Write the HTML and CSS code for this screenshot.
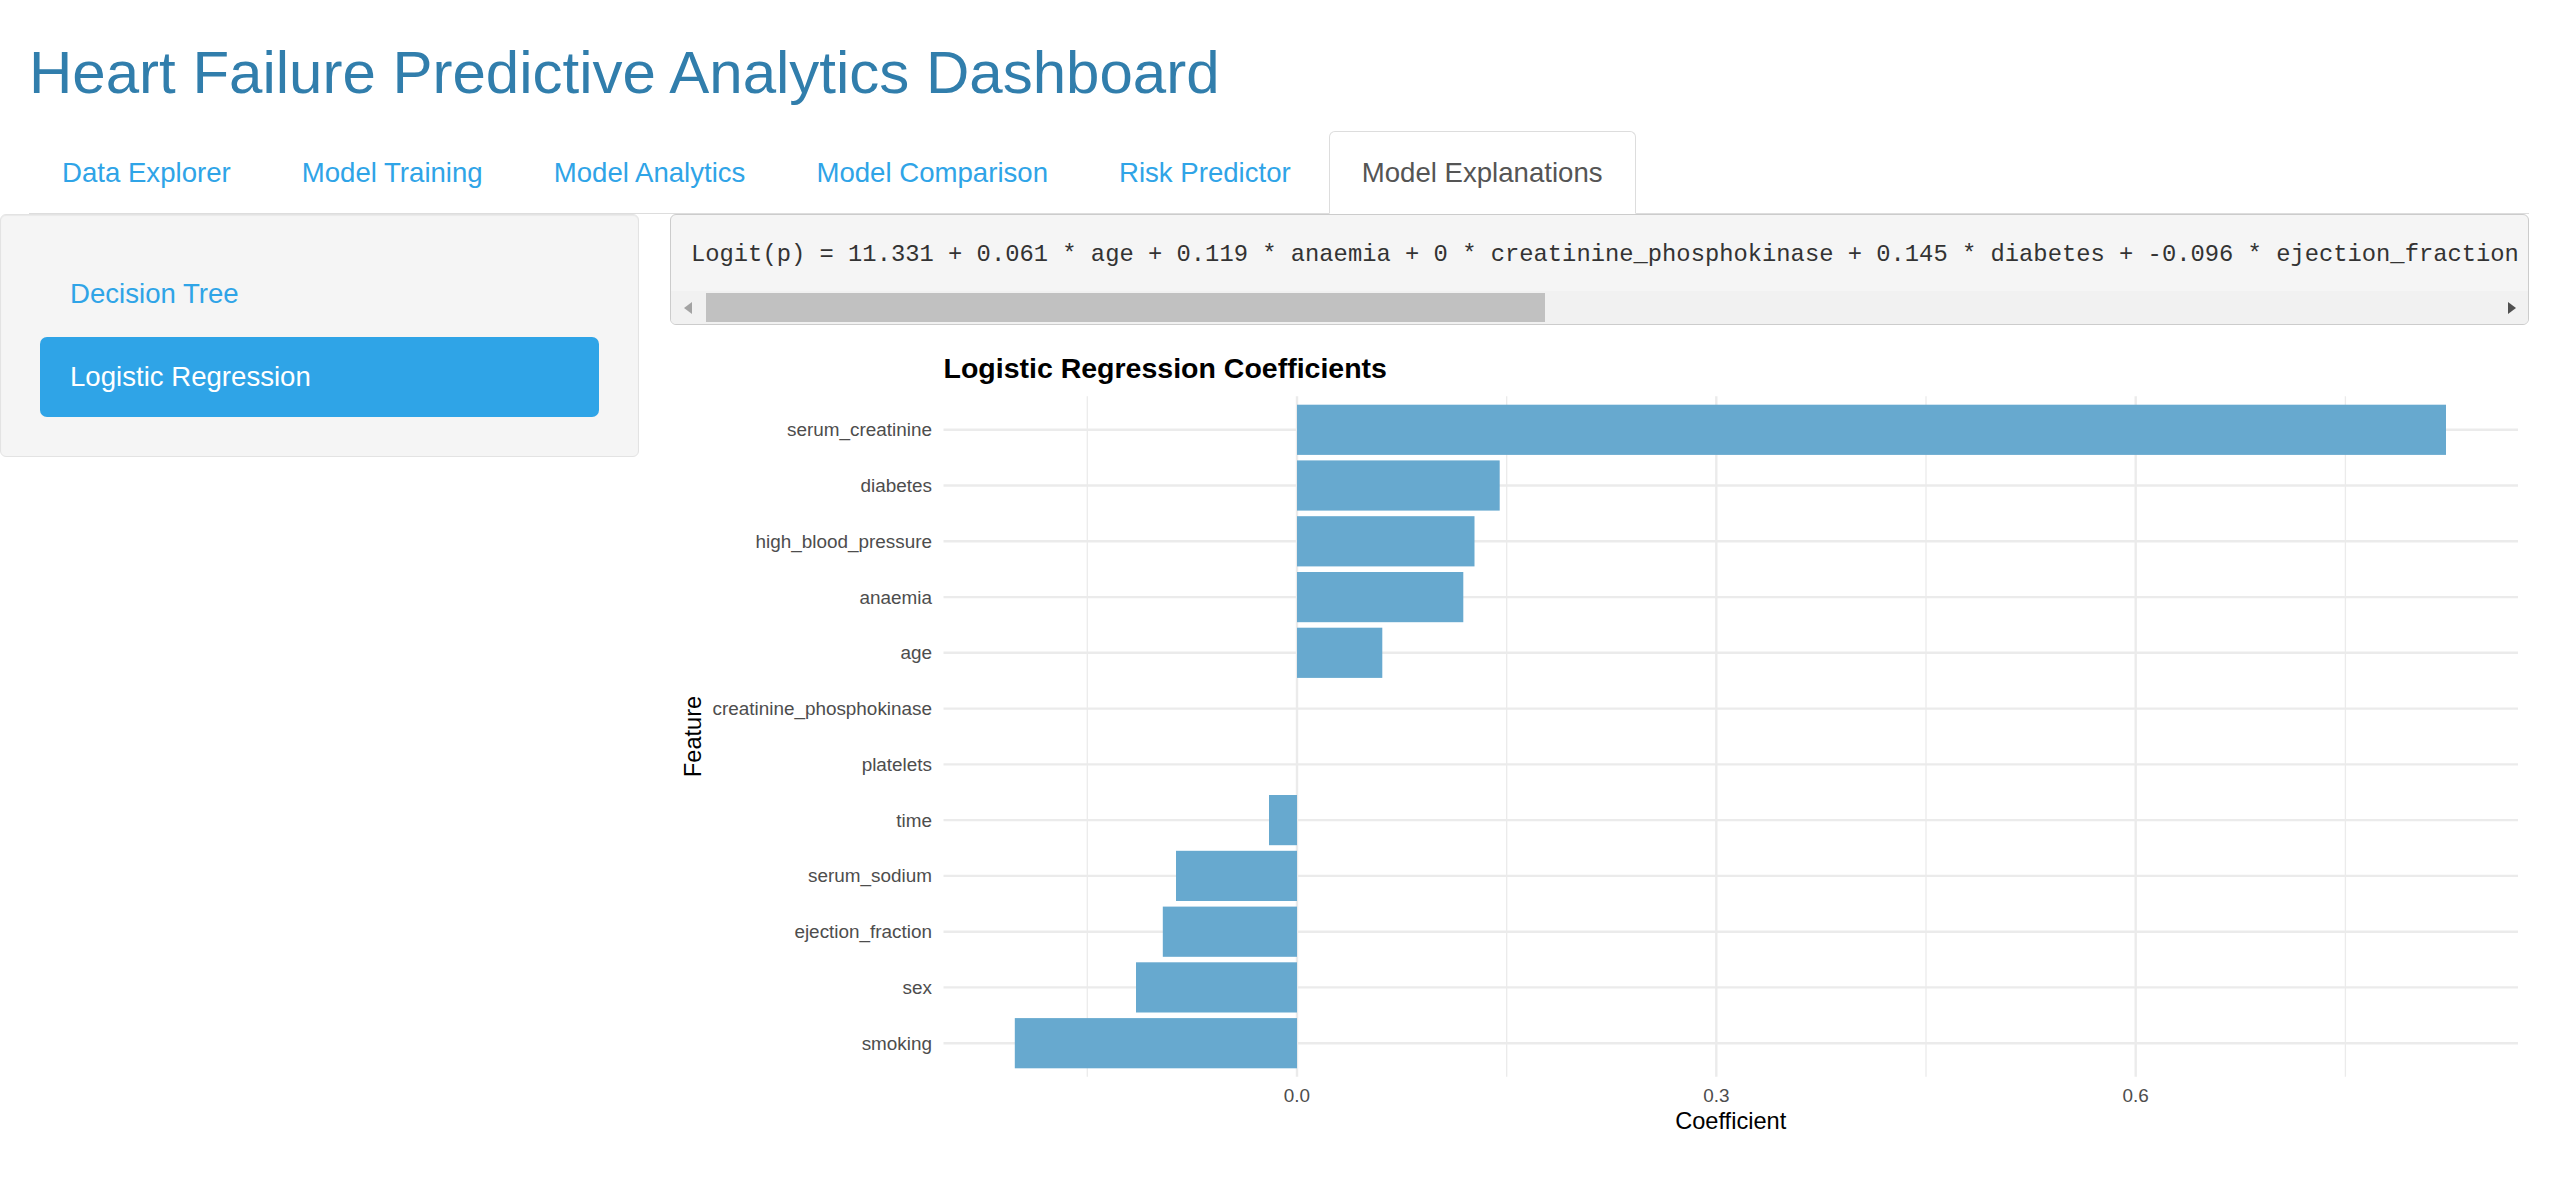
FILE: index.html
```html
<!DOCTYPE html>
<html>
<head lang="en">
    <meta charset="UTF-8">
    <title>Heart Failure Predictive Analytics Dashboard</title>
    <link rel="stylesheet" href="styles.css">
</head>
<body>
<div class="page">
    <h1 class="title">Heart Failure Predictive Analytics Dashboard</h1>
    <ul class="tabs">
        <li><a href="#">Data Explorer</a></li>
        <li><a href="#">Model Training</a></li>
        <li><a href="#">Model Analytics</a></li>
        <li><a href="#">Model Comparison</a></li>
        <li><a href="#">Risk Predictor</a></li>
        <li class="active"><a href="#">Model Explanations</a></li>
    </ul>
    <div class="tab-content">
        <div class="well">
            <ul class="pills">
                <li><a href="#">Decision Tree</a></li>
                <li class="active"><a href="#">Logistic Regression</a></li>
            </ul>
        </div>
        <div class="main">
            <div class="formula">
                <pre>Logit(p) = 11.331 + 0.061 * age + 0.119 * anaemia + 0 * creatinine_phosphokinase + 0.145 * diabetes + -0.096 * ejection_fraction + 0.127 * high_blood_pressure + 0 * platelets + 0.822 * serum_creatinine + -0.087 * serum_sodium + -0.115 * sex + -0.202 * smoking + -0.02 * time</pre>
                <div class="hscroll">
                    <div class="sbtn"><span class="arrow-left"></span></div>
                    <div class="thumb"></div>
                    <div class="track"></div>
                    <div class="sbtn"><span class="arrow-right"></span></div>
                </div>
            </div>
            <svg class="chart" width="1859" height="820" viewBox="0 0 1859 820">
                <!-- minor grid -->
                <g class="grid-minor">
                    <line x1="417.3" y1="55.3" x2="417.3" y2="735.7"/>
                    <line x1="836.7" y1="55.3" x2="836.7" y2="735.7"/>
                    <line x1="1256" y1="55.3" x2="1256" y2="735.7"/>
                    <line x1="1675.4" y1="55.3" x2="1675.4" y2="735.7"/>
                </g>
                <!-- major grid -->
                <g class="grid-major">
                    <line x1="627" y1="55.3" x2="627" y2="735.7"/>
                    <line x1="1046.3" y1="55.3" x2="1046.3" y2="735.7"/>
                    <line x1="1465.7" y1="55.3" x2="1465.7" y2="735.7"/>
                    <line x1="273.5" y1="88.8" x2="1848" y2="88.8"/>
                    <line x1="273.5" y1="144.5" x2="1848" y2="144.5"/>
                    <line x1="273.5" y1="200.3" x2="1848" y2="200.3"/>
                    <line x1="273.5" y1="256.1" x2="1848" y2="256.1"/>
                    <line x1="273.5" y1="311.8" x2="1848" y2="311.8"/>
                    <line x1="273.5" y1="367.6" x2="1848" y2="367.6"/>
                    <line x1="273.5" y1="423.4" x2="1848" y2="423.4"/>
                    <line x1="273.5" y1="479.1" x2="1848" y2="479.1"/>
                    <line x1="273.5" y1="534.9" x2="1848" y2="534.9"/>
                    <line x1="273.5" y1="590.7" x2="1848" y2="590.7"/>
                    <line x1="273.5" y1="646.4" x2="1848" y2="646.4"/>
                    <line x1="273.5" y1="702.2" x2="1848" y2="702.2"/>
                </g>
                <g class="bars">
                    <rect x="627" y="63.7" width="1149" height="50.2"/>
                    <rect x="627" y="119.4" width="202.7" height="50.2"/>
                    <rect x="627" y="175.2" width="177.5" height="50.2"/>
                    <rect x="627" y="231" width="166.3" height="50.2"/>
                    <rect x="627" y="286.7" width="85.3" height="50.2"/>
                    <rect x="599" y="454" width="28" height="50.2"/>
                    <rect x="506" y="509.8" width="121" height="50.2"/>
                    <rect x="492.8" y="565.6" width="134.2" height="50.2"/>
                    <rect x="466" y="621.3" width="161" height="50.2"/>
                    <rect x="344.8" y="677.1" width="282.2" height="50.2"/>
                </g>
                <text class="plot-title" x="273.5" y="37.3">Logistic Regression Coefficients</text>
                <g class="y-labels">
                    <text x="262" y="95.3">serum_creatinine</text>
                    <text x="262" y="151">diabetes</text>
                    <text x="262" y="206.8">high_blood_pressure</text>
                    <text x="262" y="262.6">anaemia</text>
                    <text x="262" y="318.3">age</text>
                    <text x="262" y="374.1">creatinine_phosphokinase</text>
                    <text x="262" y="429.9">platelets</text>
                    <text x="262" y="485.6">time</text>
                    <text x="262" y="541.4">serum_sodium</text>
                    <text x="262" y="597.2">ejection_fraction</text>
                    <text x="262" y="652.9">sex</text>
                    <text x="262" y="708.7">smoking</text>
                </g>
                <g class="x-labels">
                    <text x="627" y="761.3">0.0</text>
                    <text x="1046.3" y="761.3">0.3</text>
                    <text x="1465.7" y="761.3">0.6</text>
                </g>
                <text class="axis-title" x="1060.7" y="788">Coefficient</text>
                <text class="axis-title" transform="translate(30.5,395.5) rotate(-90)">Feature</text>
            </svg>
        </div>
    </div>
</div>
</body>
</html>
```

FILE: styles.css
```css
*{
    box-sizing: border-box;
}
body{
    margin: 0;
    font-family: "Liberation Sans", Arial, sans-serif;
    color: #555;
    background: #fff;
}
.page{
    padding: 0 22px 0 29px;
}
.title{
    margin: 40px 0 25px 0;
    font-size: 60px;
    line-height: 66px;
    font-weight: normal;
    color: #317eac;
}
.tabs{
    display: flex;
    list-style: none;
    margin: 0;
    padding: 0;
    border-bottom: 1px solid #ddd;
}
.tabs li{
    margin: 0 5px -1px 0;
}
.tabs a{
    display: block;
    padding: 0 32px;
    line-height: 81px;
    font-size: 27.6px;
    color: #2fa4e7;
    text-decoration: none;
    border: 1px solid transparent;
    border-radius: 6px 6px 0 0;
}
.tabs .active a{
    color: #555;
    background: #fff;
    border-color: #ddd #ddd transparent;
}
.tab-content{
    display: flex;
    align-items: flex-start;
    margin-left: -29px;
}
.well{
    flex: 0 0 639px;
    padding: 39px;
    background: #f5f5f5;
    border: 1px solid #e3e3e3;
    border-radius: 6px;
    box-shadow: inset 0 1px 1px rgba(0,0,0,0.05);
}
.pills{
    display: flex;
    flex-direction: column;
    gap: 3.4px;
    list-style: none;
    margin: 0;
    padding: 0;
}
.pills a{
    display: block;
    padding: 16px 30px 16px 30px;
    line-height: 48px;
    font-size: 27.6px;
    color: #2fa4e7;
    text-decoration: none;
    border-radius: 7px;
}
.pills .active a{
    background: #2fa4e7;
    color: #fff;
}
.main{
    flex: 1;
    min-width: 0;
    margin-left: 31px;
}
.formula{
    border: 1px solid #ccc;
    border-radius: 6px;
    background: #f5f5f5;
    overflow: hidden;
    margin-bottom: 16px;
}
.formula pre{
    margin: 0;
    padding: 23px 20px 19px 20px;
    font-family: "Liberation Mono", "DejaVu Sans Mono", monospace;
    font-size: 23.8px;
    line-height: 34px;
    color: #333;
    white-space: pre;
    overflow: hidden;
}
.hscroll{
    display: flex;
    align-items: center;
    height: 33px;
    background: #f1f1f1;
}
.sbtn{
    flex: 0 0 33px;
    height: 33px;
    display: flex;
    align-items: center;
    justify-content: center;
}
.arrow-left{
    border-top: 6.5px solid transparent;
    border-bottom: 6.5px solid transparent;
    border-right: 8px solid #a3a3a3;
}
.arrow-right{
    border-top: 6.5px solid transparent;
    border-bottom: 6.5px solid transparent;
    border-left: 8px solid #505050;
}
.thumb{
    flex: 0 0 839px;
    height: 29px;
    margin-left: 2px;
    background: #c1c1c1;
}
.track{
    flex: 1;
}
.chart{
    display: block;
    font-family: "Liberation Sans", Arial, sans-serif;
}
.grid-minor line{
    stroke: #ebebeb;
    stroke-width: 1.3;
}
.grid-major line{
    stroke: #ebebeb;
    stroke-width: 2.4;
}
.bars rect{
    fill: #67a9cf;
}
.plot-title{
    font-size: 28.5px;
    font-weight: bold;
    fill: #000;
}
.y-labels text{
    font-size: 18.9px;
    fill: #4d4d4d;
    text-anchor: end;
}
.x-labels text{
    font-size: 18.9px;
    fill: #4d4d4d;
    text-anchor: middle;
}
.axis-title{
    font-size: 23.6px;
    fill: #000;
    text-anchor: middle;
}
```
